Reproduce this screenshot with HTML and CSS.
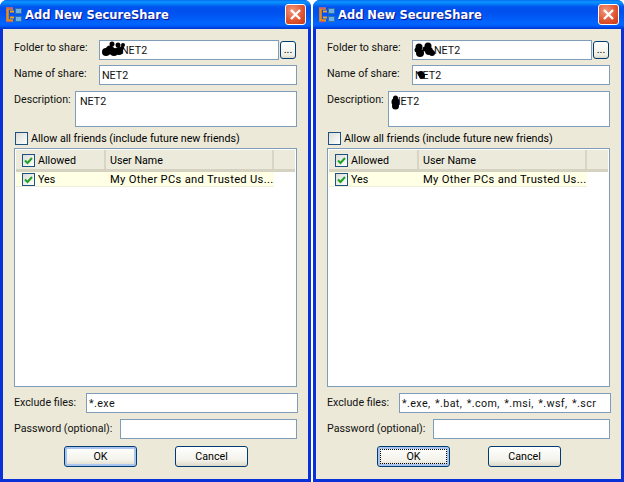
FILE: index.html
```html
<!DOCTYPE html>
<html lang="en">
<head>
<meta charset="utf-8">
<title>Add New SecureShare</title>
<link rel="stylesheet" href="styles.css">
</head>
<body>
<div class="desktop">
  <section class="window win-a">
    <header class="titlebar">
      <svg class="app-icon" width="16" height="16" viewBox="0 0 16 16"><path d="M7 1.500H1.500v12H7" fill="none" stroke="#f08a10" stroke-width="2.6"/><path d="M1 1h6M1 15h4" stroke="#a040c0" stroke-width="1"/><path d="M4 4.500h4M4 10.500h4" stroke="#f8a020" stroke-width="1.800"/><rect x="9.500" y="1.500" width="6" height="5" fill="#6fb0e0" stroke="#2c70b0"/><rect x="9.500" y="9.500" width="6" height="5" fill="#6fb0e0" stroke="#2c70b0"/></svg>
      <h1 class="title">Add New SecureShare</h1>
      <button class="close" type="button" aria-label="Close"><svg width="13" height="13" viewBox="0 0 13 13"><path d="M2 2l9 9M11 2l-9 9" stroke="#fff" stroke-width="2.400"/></svg></button>
    </header>
    <form class="client">
      <div class="row row-folder">
        <label class="lab">Folder to share:</label>
        <div class="field folder"><span class="val v-folder">NET2</span>
          <svg class="blot blot-a1" width="26" height="16" viewBox="0 0 26 16"><g fill="#000"><circle cx="5" cy="11" r="4"/><circle cx="9" cy="9" r="4.500"/><circle cx="11" cy="3" r="2.500"/><circle cx="13" cy="11" r="4"/><circle cx="18" cy="10" r="4"/><circle cx="17" cy="4" r="2.500"/><circle cx="22" cy="4" r="2"/><circle cx="21" cy="7" r="2"/></g></svg>
        </div>
        <button class="dots" type="button">...</button>
      </div>
      <div class="row row-name">
        <label class="lab">Name of share:</label>
        <div class="field grow"><span class="val">NET2</span></div>
      </div>
      <div class="row row-desc">
        <label class="lab">Description:</label>
        <div class="field area grow"><span class="val">NET2</span></div>
      </div>
      <label class="allow"><span class="cb"></span><span>Allow all friends (include future new friends)</span></label>
      <div class="list">
        <div class="list-head">
          <div class="col col-allowed"><span class="cb cb-sm checked"><svg width="11" height="11" viewBox="0 0 11 11"><path d="M2 5.500l2.500 2.500L9 3" fill="none" stroke="#21a121" stroke-width="2"/></svg></span>Allowed</div>
          <div class="col col-user">User Name</div>
          <div class="col col-rest"></div>
        </div>
        <div class="list-row">
          <div class="cell cell-allowed"><span class="cb cb-sm checked"><svg width="11" height="11" viewBox="0 0 11 11"><path d="M2 5.500l2.500 2.500L9 3" fill="none" stroke="#21a121" stroke-width="2"/></svg></span>Yes</div>
          <div class="cell cell-user">My Other PCs and Trusted Us...</div>
        </div>
      </div>
      <div class="row row-ex">
        <label class="lab">Exclude files:</label>
        <div class="field grow"><span class="val val-list">*.exe</span></div>
      </div>
      <div class="row row-pw">
        <label class="lab">Password (optional):</label>
        <div class="field grow"></div>
      </div>
      <div class="buttons">
        <button class="btn btn-default" type="button">OK</button>
        <button class="btn" type="button">Cancel</button>
      </div>
    </form>
  </section>

  <section class="window win-b">
    <header class="titlebar">
      <svg class="app-icon" width="16" height="16" viewBox="0 0 16 16"><path d="M7 1.500H1.500v12H7" fill="none" stroke="#f08a10" stroke-width="2.6"/><path d="M1 1h6M1 15h4" stroke="#a040c0" stroke-width="1"/><path d="M4 4.500h4M4 10.500h4" stroke="#f8a020" stroke-width="1.800"/><rect x="9.500" y="1.500" width="6" height="5" fill="#6fb0e0" stroke="#2c70b0"/><rect x="9.500" y="9.500" width="6" height="5" fill="#6fb0e0" stroke="#2c70b0"/></svg>
      <h1 class="title">Add New SecureShare</h1>
      <button class="close" type="button" aria-label="Close"><svg width="13" height="13" viewBox="0 0 13 13"><path d="M2 2l9 9M11 2l-9 9" stroke="#fff" stroke-width="2.400"/></svg></button>
    </header>
    <form class="client">
      <div class="row row-folder">
        <label class="lab">Folder to share:</label>
        <div class="field folder"><span class="val v-folder">NET2</span>
          <svg class="blot blot-b1" width="22" height="16" viewBox="0 0 22 16"><g fill="#000"><circle cx="5" cy="5" r="3.500"/><circle cx="6" cy="11" r="4"/><circle cx="3" cy="8" r="2.500"/><circle cx="14" cy="4" r="3.500"/><circle cx="15" cy="9" r="4"/><circle cx="18" cy="11" r="3"/><circle cx="11" cy="7" r="2.500"/></g></svg>
        </div>
        <button class="dots" type="button">...</button>
      </div>
      <div class="row row-name">
        <label class="lab">Name of share:</label>
        <div class="field grow"><span class="val">NET2</span>
          <svg class="blot blot-b2" width="9" height="10" viewBox="0 0 9 10"><g fill="#000"><circle cx="4" cy="4" r="3"/><circle cx="5" cy="6" r="3"/><circle cx="2" cy="3" r="1.500"/></g></svg>
        </div>
      </div>
      <div class="row row-desc">
        <label class="lab">Description:</label>
        <div class="field area grow"><span class="val">NET2</span>
          <svg class="blot blot-b3" width="9" height="15" viewBox="0 0 9 15"><g fill="#000"><circle cx="4.500" cy="3" r="2.500"/><circle cx="4.500" cy="7" r="4"/><circle cx="4.500" cy="11" r="3.500"/></g></svg>
        </div>
      </div>
      <label class="allow"><span class="cb"></span><span>Allow all friends (include future new friends)</span></label>
      <div class="list">
        <div class="list-head">
          <div class="col col-allowed"><span class="cb cb-sm checked"><svg width="11" height="11" viewBox="0 0 11 11"><path d="M2 5.500l2.500 2.500L9 3" fill="none" stroke="#21a121" stroke-width="2"/></svg></span>Allowed</div>
          <div class="col col-user">User Name</div>
          <div class="col col-rest"></div>
        </div>
        <div class="list-row">
          <div class="cell cell-allowed"><span class="cb cb-sm checked"><svg width="11" height="11" viewBox="0 0 11 11"><path d="M2 5.500l2.500 2.500L9 3" fill="none" stroke="#21a121" stroke-width="2"/></svg></span>Yes</div>
          <div class="cell cell-user">My Other PCs and Trusted Us...</div>
        </div>
      </div>
      <div class="row row-ex">
        <label class="lab">Exclude files:</label>
        <div class="field grow"><span class="val val-list">*.exe, *.bat, *.com, *.msi, *.wsf, *.scr</span></div>
      </div>
      <div class="row row-pw">
        <label class="lab">Password (optional):</label>
        <div class="field grow"></div>
      </div>
      <div class="buttons">
        <button class="btn btn-default btn-focus" type="button">OK</button>
        <button class="btn" type="button">Cancel</button>
      </div>
    </form>
  </section>
</div>
</body>
</html>
```
FILE: styles.css
```css
* { box-sizing: border-box; }
html, body { margin: 0; padding: 0; background: #fff; }
body { width: 624px; height: 482px; overflow: hidden; font: 10.7px/13px Roboto, "Noto Sans", sans-serif; color: #000; }
.desktop { display: flex; justify-content: space-between; height: 482px; }
.window { width: 311px; height: 482px; display: flex; flex-direction: column; background: #0831d9; border-radius: 7px 7px 0 0; padding: 0 3px 3px; }
.titlebar { height: 29px; margin: 0 -3px; padding: 0 5px 0 6px; display: flex; align-items: center; border-radius: 7px 7px 0 0;
  background: linear-gradient(#0a6af0 0, #0997ff 2px, #0053ee 7px, #0050ee 12px, #0066ff 24px, #005bff 26px, #003dd7 28px, #003dd7 100%); }
.app-icon { flex: none; }
.title { flex: 1; margin: 0 0 0 3px; font: bold 11.5px/16px "DejaVu Sans", sans-serif; color: #fff; text-shadow: 1px 1px 0 #0f1089; white-space: nowrap; }
.close { width: 21px; height: 21px; padding: 0; border: 1px solid #fff; border-radius: 3px; background: radial-gradient(circle at 35% 30%, #ef9a7c, #e0512d 60%, #c33b17); display: flex; align-items: center; justify-content: center; }
.client { flex: 1; background: #ece9d8; display: flex; flex-direction: column; padding: 11px 11px 0; }
.row { display: flex; align-items: flex-start; }
.lab { flex: none; white-space: nowrap; color: #111; }
.field { position: relative; height: 20px; background: #fff; border: 1px solid #7f9db9; padding: 3px 0 0 2px; white-space: nowrap; overflow: hidden; }
.grow { flex: 1; }
.val { color: #111; }
.val-list { letter-spacing: 0.4px; word-spacing: 1.500px; }
.v-folder { margin-left: 19px; }
.row-folder { height: 20px; }
.row-folder .lab { width: 85px; margin-top: 1px; }
.folder { width: 180px; flex: none; }
.dots { width: 16px; height: 18px; margin: 1px 0 0 1px; padding: 0; border: 1px solid #003c74; border-radius: 3px; background: linear-gradient(#fff, #f0efe6 80%, #dcd8c8); font: 11px/12px Roboto, sans-serif; color: #000; }
.row-name { margin-top: 5px; }
.row-name .lab { width: 85px; margin-top: 2px; }
.row-desc { margin-top: 6px; }
.row-desc .lab { width: 61px; margin-top: 2px; }
.area { height: 36px; padding: 3px 0 0 4px; }
.allow { display: flex; align-items: center; gap: 3px; height: 13px; margin: 5px 0 0 1px; }
.cb { flex: none; display: flex; align-items: center; justify-content: center; width: 13px; height: 13px; border: 1px solid #1c5180; background: linear-gradient(135deg, #dcdcd7, #fff); }
.cb-sm { width: 13px; height: 13px; }
.checked { margin-right: 3px; }
.list { width: 283px; height: 239px; margin-top: 3px; background: #fff; border: 1px solid #7f9db9; padding: 1px 0 0 1px; }
.list-head { display: flex; height: 22px; background: #ebeadb; border-bottom: 3px solid #d6d2c2; margin-right: 1px; }
.col { display: flex; align-items: center; height: 19px; padding-top: 1px; border-right: 2px solid #d8d5c4; }
.col-allowed { width: 90px; padding-left: 6px; }
.col-user { width: 168px; padding-left: 4px; }
.col-rest { border-right: 0; flex: 1; }
.list-row { display: flex; width: 258px; height: 15px; background: #ffffe6; border-bottom: 1px solid #eeeeda; }
.cell { display: flex; align-items: center; height: 14px; white-space: nowrap; }
.cell-allowed { width: 90px; padding-left: 6px; }
.cell-user { padding-left: 4px; font-size: 11.2px; letter-spacing: 0.3px; }
.row-ex { margin: 6px -1px 0 0; }
.row-ex .lab { width: 72px; margin-top: 3px; }
.row-pw { margin-top: 6px; }
.row-pw .lab { width: 106px; margin-top: 3px; }
.buttons { display: flex; gap: 38px; margin: 7px 0 0 50px; }
.btn { width: 73px; height: 21px; padding: 0; border: 1px solid #003c74; border-radius: 3px; background: linear-gradient(#fff, #f3f2ea 70%, #dcd8c8); font: 10.7px/13px Roboto, sans-serif; color: #000; }
.btn-default { box-shadow: inset 0 0 0 2px #a9c4ee; }
.btn-focus { outline: 1px dotted #000; outline-offset: -4px; }
.blot { position: absolute; }
.blot-a1 { left: 1px; top: 0; }
.blot-b1 { left: 1px; top: 1px; }
.blot-b2 { left: 4px; top: 4px; }
.blot-b3 { left: 2px; top: 3px; }
```
